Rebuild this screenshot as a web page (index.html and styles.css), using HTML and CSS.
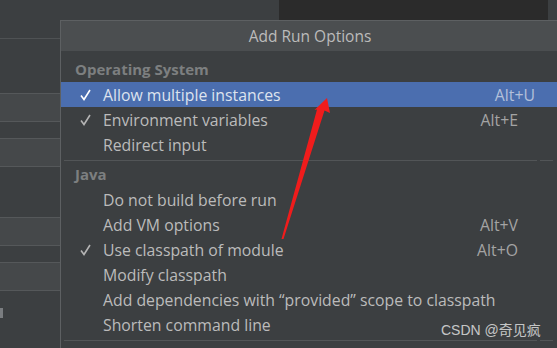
FILE: index.html
```html
<!DOCTYPE html>
<html lang="en">
<head>
  <meta charset="UTF-8" />
  <meta name="viewport" content="width=device-width, initial-scale=1.0"/>
  <title>Add Run Options</title>
  <link rel="stylesheet" href="styles.css">
</head>
<body>
  <div class="page">
    <div class="side">
      <div class="side-line"></div>
      <div class="side-field first"></div>
      <div class="side-field near"></div>
      <div class="side-field far"></div>
      <div class="side-field near"></div>
      <div class="side-mark"></div>
    </div>

    <div class="right">
      <div class="top">
        <div class="top-left"></div>
        <div class="editor"></div>
        <div class="top-right"></div>
      </div>

      <div class="popup">
        <div class="popup-title">Add Run Options</div>
        <div class="popup-list">
          <div class="group">Operating System</div>
          <div class="item selected">
            <span class="check"><svg width="11" height="12" viewBox="0 0 11 12"><polyline points="1,6.5 4,10.5 10,1" /></svg></span>
            <span class="label">Allow multiple instances</span>
            <span class="key">Alt+U</span>
          </div>
          <div class="item">
            <span class="check"><svg width="11" height="12" viewBox="0 0 11 12"><polyline points="1,6.5 4,10.5 10,1" /></svg></span>
            <span class="label">Environment variables</span>
            <span class="key">Alt+E</span>
          </div>
          <div class="item">
            <span class="check"></span>
            <span class="label">Redirect input</span>
          </div>

          <div class="separator"><div class="sep-line"></div><div class="sep-end"></div></div>

          <div class="group">Java</div>
          <div class="item">
            <span class="check"></span>
            <span class="label">Do not build before run</span>
          </div>
          <div class="item">
            <span class="check"></span>
            <span class="label">Add VM options</span>
            <span class="key">Alt+V</span>
          </div>
          <div class="item">
            <span class="check"><svg width="11" height="12" viewBox="0 0 11 12"><polyline points="1,6.5 4,10.5 10,1" /></svg></span>
            <span class="label">Use classpath of module</span>
            <span class="key">Alt+O</span>
          </div>
          <div class="item">
            <span class="check"></span>
            <span class="label">Modify classpath</span>
          </div>
          <div class="item">
            <span class="check"></span>
            <span class="label">Add dependencies with &ldquo;provided&rdquo; scope to classpath</span>
          </div>
          <div class="item">
            <span class="check"></span>
            <span class="label">Shorten command line</span>
          </div>

          <div class="separator"><div class="sep-line"></div><div class="sep-end"></div></div>
        </div>
      </div>
    </div>
  </div>

  <!-- annotation drawn over the screenshot -->
  <svg class="arrow" width="557" height="348" viewBox="0 0 557 348">
    <polygon points="327,98 330,113 324.5,110.5 283.5,239 281.5,239 317,109.5 314.5,110" />
  </svg>
  <div class="watermark">CSDN @奇见疯</div>
</body>
</html>
```

FILE: styles.css
```css
body {
  margin: 0;
  padding: 0;
  width: 557px;
  height: 348px;
  overflow: hidden;
  position: relative;
  background-color: #3c3f41;
  font-family: "Open Sans", "Noto Sans", sans-serif;
  font-size: 15.8px;
  color: #bbbbbb;
}
.page {
  display: flex;
  height: 348px;
}
.side {
  width: 60px;
  flex-shrink: 0;
  display: flex;
  flex-direction: column;
  padding-top: 38px;
}
.side-line {
  height: 1px;
  background-color: #4f5254;
}
.side-field {
  height: 27px;
  background-color: #45484a;
  border-top: 1px solid #55585a;
  border-bottom: 1px solid #55585a;
}
.side-field.first {
  margin-top: 54px;
}
.side-field.near {
  margin-top: 16px;
}
.side-field.far {
  margin-top: 50px;
}
.side-mark {
  margin-top: 17px;
  width: 3px;
  height: 10px;
  background-color: #7a7d80;
}
.right {
  display: flex;
  flex-direction: column;
  width: 499px;
  flex-shrink: 0;
}
.top {
  display: flex;
  height: 20px;
}
.top-left {
  width: 219px;
}
.editor {
  width: 269px;
  background-color: #2b2b2b;
}
.top-right {
  flex: 1;
}
.popup {
  flex: 1;
  border-top: 1px solid #5d6062;
  border-left: 1px solid #5d6062;
  background-color: #3c3f41;
}
.popup-title {
  height: 30px;
  line-height: 30px;
  text-align: center;
  background-color: #4b4e50;
  font-size: 15.5px;
}
.popup-list {
  padding-top: 6px;
}
.group {
  height: 25px;
  line-height: 25px;
  padding-left: 14px;
  font-weight: bold;
  font-size: 15px;
  color: #7d7f80;
}
.item {
  display: flex;
  align-items: center;
  height: 25px;
  padding-left: 19px;
  padding-right: 41px;
  white-space: nowrap;
}
.item .check {
  width: 23px;
  display: flex;
  align-items: center;
}
.item .check polyline {
  fill: none;
  stroke: #b4b4b4;
  stroke-width: 1.6;
}
.item .label {
  flex: 1;
}
.item .key {
  color: #a4a4a4;
}
.item.selected {
  background-color: #4b6eaf;
  color: #dde3ee;
  padding-right: 24px;
}
.item.selected .check polyline {
  stroke: #ffffff;
}
.item.selected .key {
  color: #b3c0da;
}
.separator {
  display: flex;
  height: 5px;
  padding-top: 3px;
  box-sizing: border-box;
  padding-left: 3px;
  gap: 3px;
}
.sep-line {
  width: 473px;
  height: 1px;
  background-color: #525557;
}
.sep-end {
  width: 13px;
  height: 1px;
  background-color: #525557;
}
.arrow {
  position: absolute;
  left: 0;
  top: 0;
}
.arrow polygon {
  fill: #f01c1c;
}
.watermark {
  position: absolute;
  left: 441px;
  top: 319px;
  font-family: "Liberation Sans", "Noto Sans CJK SC", sans-serif;
  font-size: 14px;
  color: rgba(235, 235, 235, 0.8);
}
```
